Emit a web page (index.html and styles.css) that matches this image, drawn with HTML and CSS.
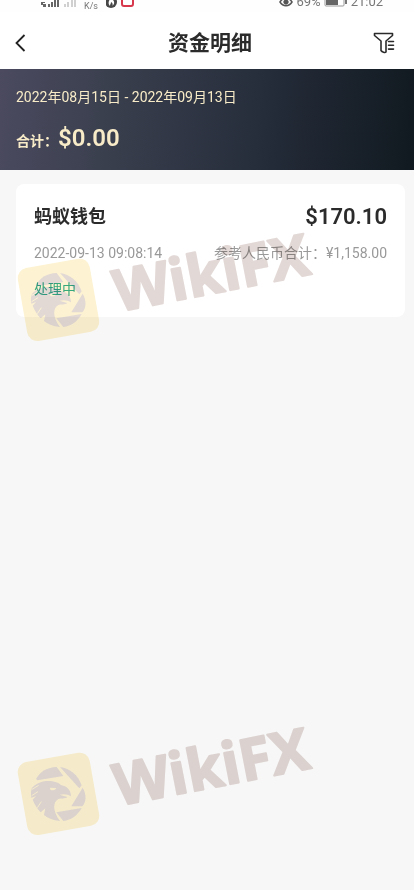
FILE: index.html
```html
<!DOCTYPE html>
<html lang="zh-CN">
<head>
    <meta charset="UTF-8">
    <meta name="viewport" content="width=device-width, initial-scale=1.0">
    <title>资金明细</title>
    <link rel="stylesheet" href="styles.css">
</head>
<body>

    <!-- Phone status bar -->
    <div class="status-bar">
        <svg class="signal" width="38" height="12" viewBox="0 0 38 12" aria-hidden="true">
            <g fill="#666">
                <path d="M1 2h4v1H3v2H1zM3 4h3v3H3z"/>
                <rect x="8" y="4" width="2" height="3"/>
                <rect x="11" y="2" width="2" height="5"/>
                <rect x="14" y="0" width="2" height="7"/>
                <rect x="17" y="0" width="2" height="7"/>
            </g>
            <g fill="#d0d0d0">
                <rect x="24" y="4" width="2" height="3"/>
                <rect x="27" y="2" width="2" height="5"/>
                <rect x="31" y="0" width="2" height="7"/>
                <rect x="34" y="0" width="2" height="7"/>
            </g>
        </svg>
        <span class="speed">K/s</span>
        <svg class="app-icons" width="30" height="12" viewBox="0 0 30 12" aria-hidden="true">
            <circle cx="5" cy="2" r="6" fill="#484848"/>
            <path d="M5-2C2 1 2 4 4 6c0-2 1-2 1-4 2 1 2 3 1 4 3-2 3-5-1-8z" fill="#fff"/>
            <rect x="16" y="-5" width="11" height="11" rx="2" fill="#fff" stroke="#d8384c" stroke-width="2"/>
        </svg>
        <div class="status-right">
            <svg width="14" height="12" viewBox="0 0 14 12" fill="none" stroke="#555" aria-hidden="true">
                <path d="M1 2c3-5 9-5 12 0-3 5-9 5-12 0z" stroke-width="1.5"/>
                <circle cx="7" cy="2" r="2.2" fill="#555"/>
            </svg>
            <span>69%</span>
            <svg width="24" height="12" viewBox="0 0 24 12" aria-hidden="true">
                <rect x="1" y="-5" width="19" height="11" rx="1" fill="#fff" stroke="#999"/>
                <rect x="2" y="-3" width="12" height="8" fill="#666"/>
                <path d="M22 0v4" stroke="#777" stroke-width="2"/>
            </svg>
            <span>21:02</span>
        </div>
    </div>

    <header class="nav">
        <button class="icon-button" type="button" aria-label="返回">
            <svg width="12" height="20" viewBox="0 0 12 20" fill="none" stroke="#222" stroke-width="1.8">
                <path d="M9.500 2L1.500 10l8 8"/>
            </svg>
        </button>
        <h1>资金明细</h1>
        <button class="icon-button" type="button" aria-label="筛选">
            <svg width="22" height="22" viewBox="0 0 22 22" fill="none" stroke="#2b2b2b" stroke-width="1.6" stroke-linejoin="round" stroke-linecap="round">
                <path d="M13 12V9L19.500 3.500V1.500H1.500v2L8 9v9.500c1 1.500 4 2.500 5 1.500V12"/>
                <path d="M15.500 9.500h5M15.500 13.300h5M15.500 17.100h5"/>
            </svg>
        </button>
    </header>

    <section class="summary">
        <p class="range">2022年08月15日 - 2022年09月13日</p>
        <p class="total">合计：<strong>$0.00</strong></p>
    </section>

    <main class="records">
        <article class="record">
            <div class="row">
                <h2>蚂蚁钱包</h2>
                <strong class="amount">$170.10</strong>
            </div>
            <div class="row detail">
                <time datetime="2022-09-13T09:08:14">2022-09-13 09:08:14</time>
                <span>参考人民币合计：¥1,158.00</span>
            </div>
            <p class="state">处理中</p>
        </article>
    </main>

    <!-- Watermarks -->
    <svg class="watermark watermark-top" width="330" height="130" viewBox="0 0 330 130" aria-hidden="true">
        <g id="mark">
            <rect x="-36" y="-37" width="73" height="74" rx="10" fill="#fdf3d2" transform="translate(58 74) rotate(-10)"/>
            <g transform="translate(10 25) scale(.3333)" fill="#e2d8d4">
                <!-- lens blades -->
                <path d="M78 102C90 80 112 67 140 66L160 93L82 106z"/>
                <path d="M150 66C180 70 204 90 215 121L208 130z"/>
                <path d="M218 128C231 150 228 172 217 184L184 184z"/>
                <path d="M139 202L215 189C202 212 184 225 160 228z"/>
                <!-- eagle -->
                <path d="M66 128C76 118 92 110 108 108C130 107 146 112 154 121C172 124 183 136 183 154C174 147 162 146 148 149L172 156C164 163 154 158 144 163C128 172 128 200 150 228C128 226 112 219 102 210L106 190L92 202C84 194 74 180 68 164L78 153L64 158C62 148 62 138 66 128z"/>
                <path d="M120 128L139 129C136 136 126 138 121 134z" fill="#fdf3d2"/>
                <path d="M66 133L86 121M65 152L84 140M82 188L94 170" fill="none" stroke="#fdf3d2" stroke-width="3"/>
            </g>
            <text class="wordmark" x="0" y="0" transform="translate(118 86) rotate(-11)">WikiFX</text>
        </g>
    </svg>
    <svg class="watermark watermark-bottom" width="330" height="130" viewBox="0 0 330 130" aria-hidden="true">
        <use href="#mark"/>
    </svg>

</body>
</html>
```
FILE: styles.css
```css
* {
    box-sizing: border-box;
    margin: 0;
    padding: 0;
}

body {
    position: relative;
    min-height: 100vh;
    background: #f7f7f7;
    color: #2b2b2b;
    font-family: Roboto, "Noto Sans CJK SC", sans-serif;
    font-size: 14px;
    line-height: 20px;
    overflow-x: hidden;
}

/* Status bar, scrolled partly out of view */
.status-bar {
    display: flex;
    align-items: flex-end;
    height: 12px;
    padding: 0 31px 0 40px;
    background: #fefefe;
    color: #777;
    font-size: 13px;
}

.status-bar svg {
    flex: none;
}

.speed {
    margin: 0 8px 0 6px;
    font-size: 9px;
    line-height: 12px;
}

.status-right {
    display: flex;
    align-items: flex-end;
    gap: 3px;
    margin-left: auto;
}

/* Title bar */
.nav {
    display: flex;
    align-items: center;
    height: 57px;
    padding: 4px 19px 0 15px;
    background: #fff;
}

.nav h1 {
    flex: 1;
    padding-left: 10px;
    font-size: 21px;
    font-weight: 600;
    line-height: 32px;
    text-align: center;
}

.icon-button {
    display: flex;
    width: 22px;
    height: 22px;
    align-items: center;
    border: 0;
    background: none;
    cursor: pointer;
}

/* Totals */
.summary {
    padding: 18px 16px 13px;
    background: linear-gradient(95deg, #4b4a5f 0%, #3b404f 25%, #262d3b 62%, #111920 100%);
    color: #f8ecc8;
}

.total {
    display: flex;
    align-items: baseline;
    margin-top: 15px;
    font-weight: 600;
    line-height: 32px;
}

.total strong {
    font-size: 24px;
    font-weight: 600;
}

/* Records */
.records {
    padding: 14px 9px 14px 16px;
}

.record {
    padding: 18px;
    border-radius: 8px;
    background: #fff;
}

.row {
    display: flex;
    align-items: center;
    justify-content: space-between;
}

.row h2 {
    font-size: 18px;
    font-weight: 600;
    line-height: 30px;
}

.amount {
    font-size: 22px;
    font-weight: 600;
    line-height: 30px;
}

.detail {
    margin-top: 11px;
    color: #999;
}

.state {
    margin-top: 16px;
    color: #36b096;
}

/* Watermarks */
.watermark {
    position: absolute;
    left: 0;
    pointer-events: none;
    mix-blend-mode: multiply;
}

.watermark-top {
    top: 226px;
}

.watermark-bottom {
    top: 720px;
}

.wordmark {
    font-family: "Open Sans", sans-serif;
    font-size: 58px;
    font-weight: 700;
    fill: #e2d8d5;
    stroke: #e2d8d5;
    stroke-width: 2px;
    stroke-linejoin: round;
}
```
